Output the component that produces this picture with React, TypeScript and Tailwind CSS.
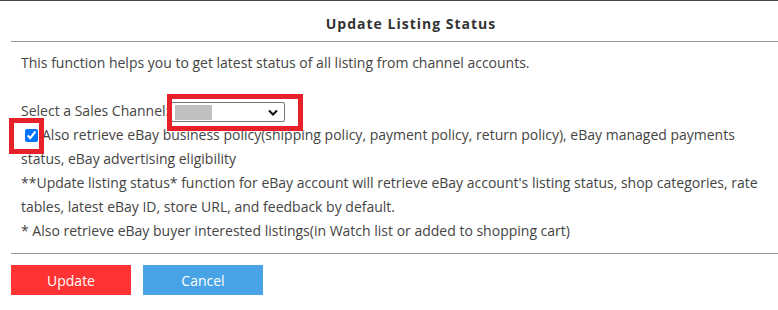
import React from "react";

export default function App() {
  const font = { fontFamily: '"Open Sans", "Liberation Sans", sans-serif' };
  return (
    <div
      className="relative w-[778px] h-[310px] bg-white border-t border-[#444] text-[#444] overflow-hidden"
      style={font}
    >
      <div className="h-[40px] flex items-center justify-center pl-[44px] pt-[4px]">
        <span className="text-[14px] font-bold tracking-[1px] text-[#333]">Update Listing Status</span>
      </div>
      <div className="ml-[11px] h-px bg-[#999]" />
      <div className="pl-[21px] text-[14px] leading-[24px] pt-[9px]">
        <p>This function helps you to get latest status of all listing from channel accounts.</p>
        <div className="mt-[24px] flex items-center h-[24px]">
          <span>Select a Sales Channel:</span>
          <div className="ml-[2px] w-[114px] h-[20px] border border-[#767676] rounded-[2px] flex items-center justify-between pl-[3px] pr-[6px] mt-[2px]">
            <div className="w-[37px] h-[15px] bg-[#c0c0c0]" />
            <svg width="10" height="7" viewBox="0 0 10 7">
              <path d="M1 1.5 L5 5.5 L9 1.5" fill="none" stroke="#111" strokeWidth="2" />
            </svg>
          </div>
        </div>
        <div className="pr-[20px]">
          <input
            type="checkbox"
            defaultChecked
            readOnly
            className="ml-[4px] mr-[4px] w-[13px] h-[13px] align-[-2px]"
          />
          Also retrieve eBay business policy(shipping policy, payment policy, return policy), eBay managed payments status, eBay advertising eligibility
        </div>
        <p className="pr-[20px]">
          **Update listing status* function for eBay account will retrieve eBay account's listing status, shop categories, rate tables, latest eBay ID, store URL, and feedback by default.
        </p>
        <p>* Also retrieve eBay buyer interested listings(in Watch list or added to shopping cart)</p>
      </div>
      <div className="ml-[11px] mt-[10px] h-px bg-[#999]" />
      <div className="flex gap-[12px] ml-[11px] mt-[11px]">
        <button className="w-[120px] h-[30px] bg-[#ff3333] text-white text-[14px]" style={font}>Update</button>
        <button className="w-[120px] h-[30px] bg-[#47a3e6] text-white text-[14px]" style={font}>Cancel</button>
      </div>
      <div className="absolute left-[167px] top-[93px] w-[136px] h-[37px] border-[5px] border-[#e8202a] pointer-events-none" />
      <div className="absolute left-[9px] top-[117px] w-[35px] h-[36px] border-[5px] border-[#e8202a] pointer-events-none" />
    </div>
  );
}
